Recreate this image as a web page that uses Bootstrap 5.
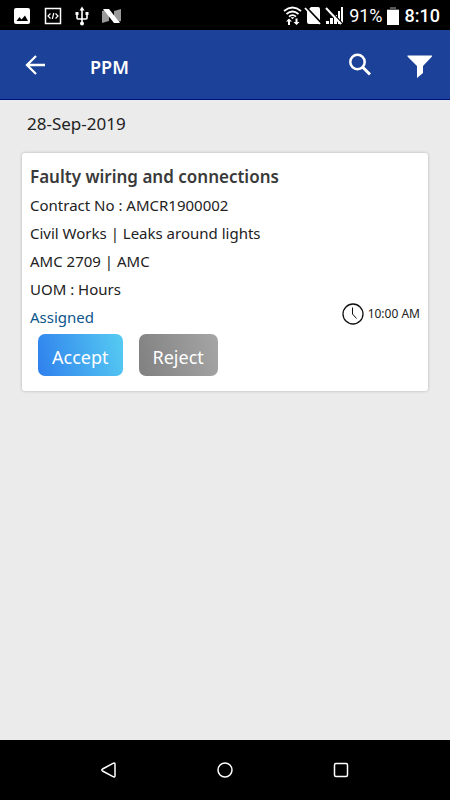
<!DOCTYPE html>
<html lang="en">
<head>
<meta charset="utf-8">
<meta name="viewport" content="width=device-width, initial-scale=1">
<title>PPM</title>
<link href="https://cdn.jsdelivr.net/npm/bootstrap@5.3.0/dist/css/bootstrap.min.css" rel="stylesheet">
<style>
body { font-family: "Noto Sans", sans-serif; background: #ebebeb; color: #222; }
svg { display: block; flex-shrink: 0; }
.status-bar { height: 30px; padding: 2px 10px 0 13px; font-family: Roboto, sans-serif; font-size: 18px; line-height: 28px; }
.notices { gap: 13px; }
.clock { padding-left: 2px; }
.app-bar { height: 70px; padding: 0 16px 0 23px; background: #1b4298; border-bottom: 1px solid #00107c; }
.app-title { font-size: 18px; line-height: 24px; margin-left: 43px; padding-top: 4px; }
.icon-btn { padding: 0; border: 0; background: none; color: inherit; }
.day { font-size: 17px; line-height: 24px; padding: 12px 27px 0; margin-bottom: 17px; }
.job { margin: 0 22px; padding: 10px 8px 15px; border: 0; border-radius: 3px; box-shadow: 0 0 3px rgba(0,0,0,.25); color: inherit; }
.job-title { font-size: 17px; line-height: 28px; color: #3a3a3a; margin: 0; }
.job-line { font-size: 15px; line-height: 28px; margin: 0; }
.state { color: #0d568c; }
.job-time { font-size: 12px; line-height: 22px; }
.acts { margin-top: 3px; }
.act { height: 42px; border: 0; border-radius: 7px; padding: 4px 14px 0; font-size: 18px; line-height: 24px; color: #fff; }
.accept { background: linear-gradient(75deg, #2f80ed, #56ccf2); }
.reject { background: linear-gradient(75deg, #808080, #a6a6a6); }
.nav-keys { height: 60px; padding: 0 100px; }
</style>
<script src="https://cdn.jsdelivr.net/npm/bootstrap@5.3.0/dist/js/bootstrap.bundle.min.js"></script>
</head>
<body class="d-flex flex-column min-vh-100">
<div class="status-bar bg-black text-white d-flex align-items-center justify-content-between">
  <div class="notices d-flex align-items-center">
    <svg width="18" height="18" viewBox="0 0 18 18"><rect x="1" y="1" width="16" height="16" rx="2" fill="#fff"/><path d="M3.500 14l3-4 2 2.500L12 8.500l3 5.500z" fill="#000"/></svg>
    <svg width="18" height="18" viewBox="0 0 18 18"><g fill="none" stroke="#fff"><rect x="1.500" y="1.500" width="15" height="15" stroke-width="1.500"/><path d="M6.500 6.500L4 9l2.500 2.500M11.500 6.500L14 9l-2.500 2.500M9.800 6l-1.500 6" stroke-width="1.200"/></g></svg>
    <svg width="14" height="20" viewBox="0 0 14 20"><path d="M7 4v13M2 8v4q0 1 1 1h8q1 0 1-1V8" fill="none" stroke="#fff" stroke-width="1.600"/><path d="M4.500 4.500L7 .5l2.500 4zM.5 6h3v3h-3zM10.500 6h3v3h-3z" fill="#fff"/><circle cx="7" cy="17.500" r="2" fill="#fff"/></svg>
    <svg width="19" height="16" viewBox="0 0 19 16"><path d="M0 3l7-2v12l-7 2zM12 3l7-2v12l-7 2z" fill="#999"/><path d="M1 1h6l11 14h-6z" fill="#fff"/></svg>
  </div>
  <div class="d-flex align-items-center gap-1">
    <svg width="62" height="20" viewBox="0 0 62 20"><g fill="none" stroke="#fff" stroke-width="1.700"><path d="M1 5q8.500-7 17 0M3.500 8q6-5 12 0M6 10.700q3.500-3 7 0"/></g><path d="M7.500 11.200h4l-2 2zM3 15.500l3-3 3 3H7V19H5v-3.500zM10.500 16h2v-3.500h2V16h2l-3 3z" fill="#fff"/><path d="M28 1h7q2 0 2 2v15H26q-2 0-2-2V5z" fill="#fff"/><path d="M23 1l16 17" stroke="#000" stroke-width="2"/><path d="M22 2l15 16" stroke="#fff" stroke-width="1.800"/><path d="M43 18v-3h3v3zM47 18v-6h3v6zM51 18V9h3v9zM55 18V5h2v13zM58 18V1h2v17z" fill="#fff"/><path d="M44 1l16 17" stroke="#000" stroke-width="1.500"/><path d="M43 2l15 16" stroke="#fff" stroke-width="2"/></svg>
    <span>91%</span>
    <svg width="12" height="18" viewBox="0 0 12 18"><path d="M3 0h6v2h3v2H0V2h3z" fill="#555"/><path d="M0 3h12v15H0z" fill="#fff"/></svg>
    <span class="clock fw-medium">8:10</span>
  </div>
</div>
<header class="app-bar text-white d-flex align-items-center">
  <button class="icon-btn" type="button" aria-label="Back"><svg width="24" height="24" viewBox="0 0 24 24"><path d="M22 12H4M13 3l-9 9 9 9" fill="none" stroke="#fff" stroke-width="2.300"/></svg></button>
  <h1 class="app-title fw-semibold mb-0 me-auto">PPM</h1>
  <button class="icon-btn" type="button" aria-label="Search"><svg width="26" height="26" viewBox="0 0 26 26"><circle cx="9.500" cy="10" r="7.200" fill="none" stroke="#fff" stroke-width="2.500"/><path d="M14.500 15l7.500 7.500" stroke="#fff" stroke-width="3"/></svg></button>
  <button class="icon-btn ms-4 ps-2" type="button" aria-label="Filter"><svg width="28" height="26" viewBox="0 0 28 26"><path d="M1.500 3.500H26v1L17 14v7l-6 5V14L1.500 4.500z" fill="#fff"/></svg></button>
</header>
<main class="flex-grow-1">
  <h2 class="day fw-normal">28-Sep-2019</h2>
  <article class="card job">
    <h3 class="job-title fw-semibold">Faulty wiring and connections</h3>
    <p class="job-line">Contract No : AMCR1900002</p>
    <p class="job-line">Civil Works | Leaks around lights</p>
    <p class="job-line">AMC 2709 | AMC</p>
    <p class="job-line">UOM : Hours</p>
    <div class="d-flex justify-content-between align-items-start">
      <p class="job-line state">Assigned</p>
      <div class="job-time d-flex align-items-center gap-1"><svg width="22" height="22" viewBox="0 0 22 22"><g fill="none" stroke="#111"><circle cx="11" cy="11" r="10" stroke-width="1.300"/><path d="M10.500 4.500V11l4 4.500"/></g></svg>10:00 AM</div>
    </div>
    <div class="acts d-flex px-2 gap-3">
      <button class="btn act accept" type="button">Accept</button>
      <button class="btn act reject" type="button">Reject</button>
    </div>
  </article>
</main>
<nav class="nav-keys bg-black d-flex justify-content-between align-items-center" aria-label="System">
  <button class="icon-btn" type="button" aria-label="Back key"><svg width="18" height="18" viewBox="0 0 18 18"><path d="M13.500 2.200L2.500 8q-1.500 1 0 2l11 5.800q1.500.5 1.500-1V3.200q0-1.500-1.500-1z" fill="none" stroke="#fff" stroke-width="1.500"/></svg></button>
  <button class="icon-btn" type="button" aria-label="Home key"><svg width="18" height="18" viewBox="0 0 18 18"><circle cx="9" cy="9" r="7" fill="none" stroke="#fff" stroke-width="1.500"/></svg></button>
  <button class="icon-btn" type="button" aria-label="Recent apps key"><svg width="18" height="18" viewBox="0 0 18 18"><rect x="2.500" y="2.500" width="13" height="13" rx="1.500" fill="none" stroke="#fff" stroke-width="1.500"/></svg></button>
</nav>
</body>
</html>
